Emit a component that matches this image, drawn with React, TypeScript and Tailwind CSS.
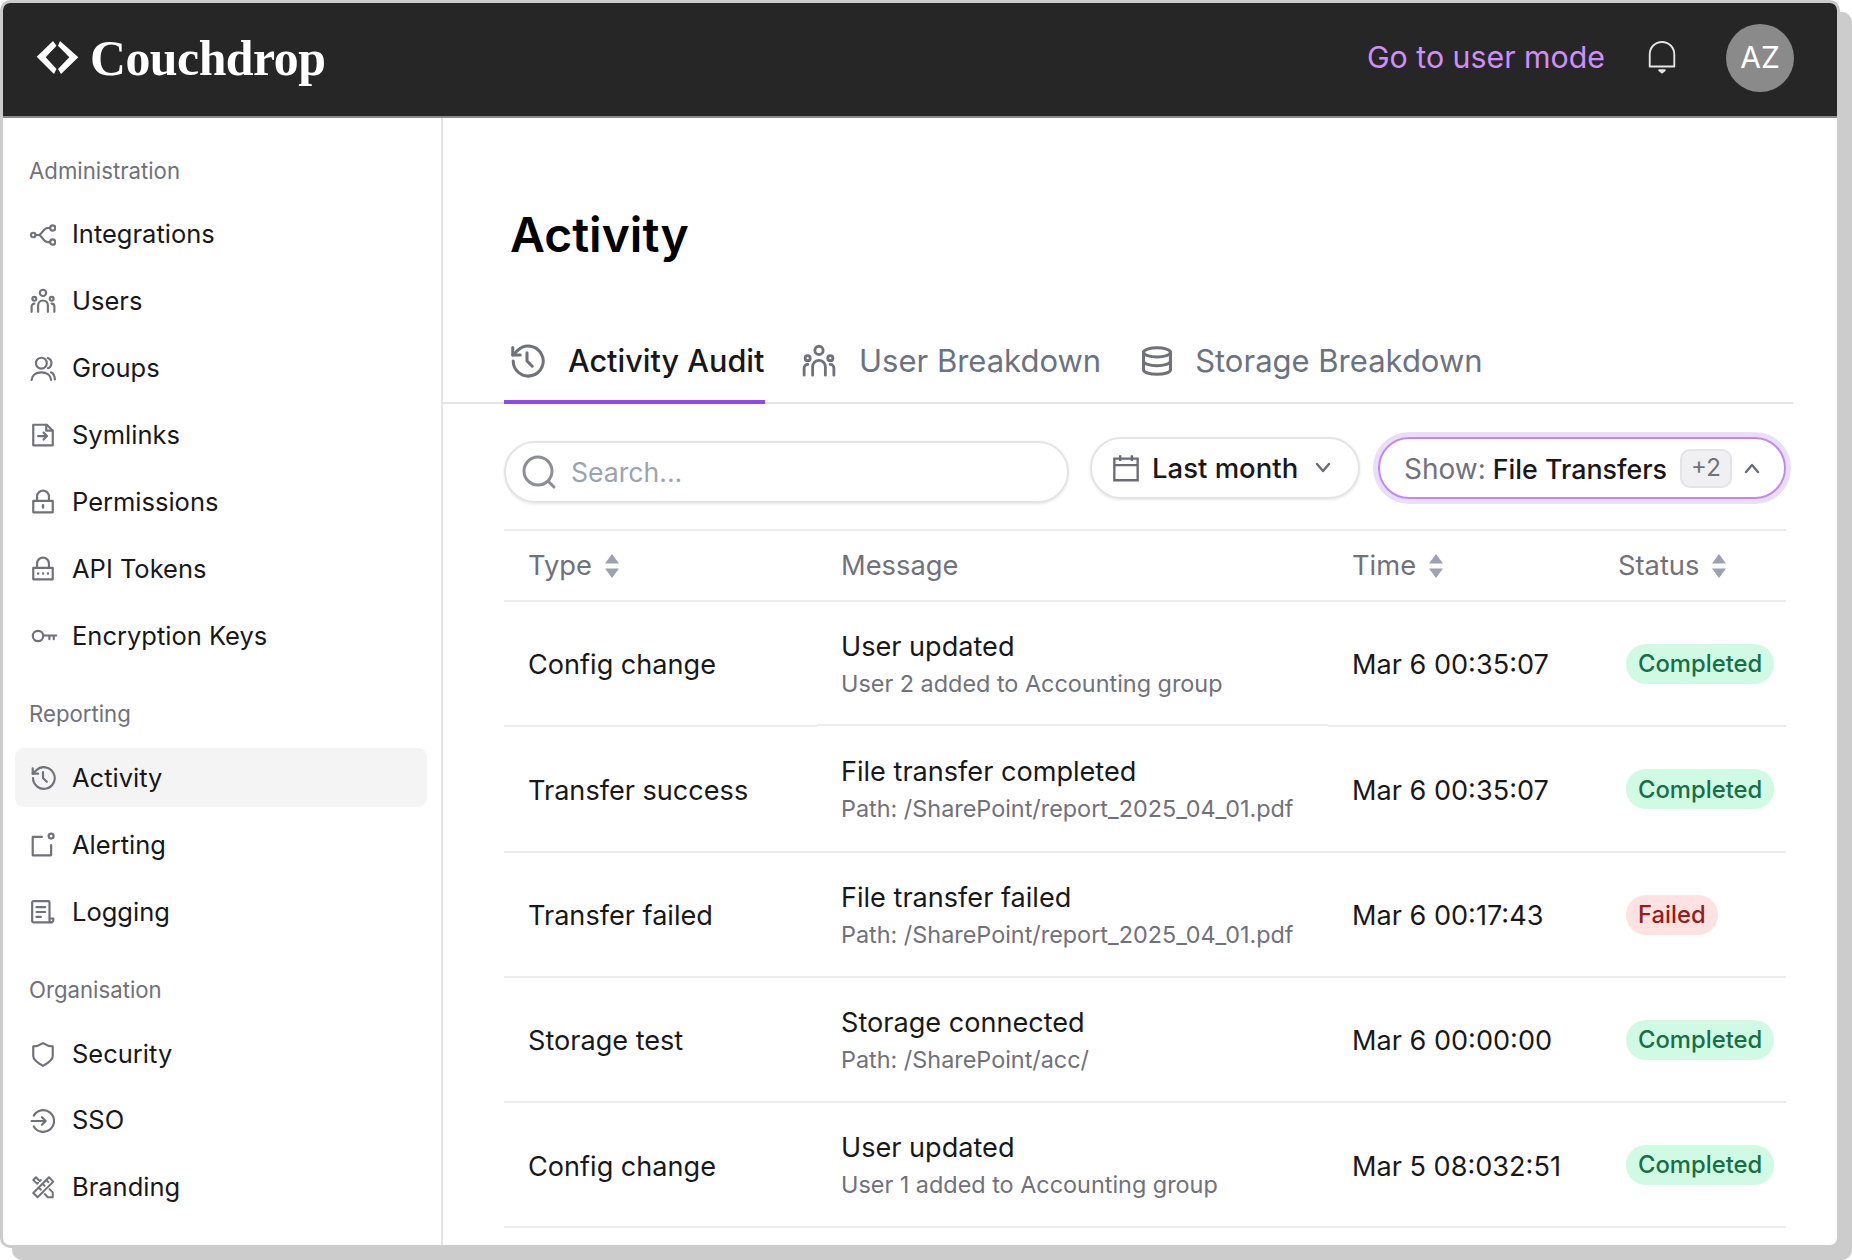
import React from "react";

const P = (props: React.SVGProps<SVGSVGElement>) => (
  <svg viewBox="0 0 24 24" fill="none" stroke="currentColor" strokeWidth="2" strokeLinecap="round" strokeLinejoin="round" {...props} />
);

const IconIntegrations = () => (
  <P className="w-[26px] h-[26px]">
    <circle cx="3" cy="12" r="2.100" />
    <circle cx="21" cy="5.500" r="2.400" />
    <circle cx="21" cy="18.500" r="2.400" />
    <path d="M5 12h3c3 0 4-6.200 8-6.500h2.600M8 12c3 0 4 6.200 8 6.500h2.600" />
  </P>
);
const IconUsers = ({ c = "w-[26px] h-[26px]" }: { c?: string }) => (
  <P className={c}>
    <circle cx="12" cy="4.500" r="2.900" />
    <circle cx="4" cy="10" r="1.800" />
    <circle cx="20" cy="10" r="1.800" />
    <path d="M7.500 22v-6a4.500 4.500 0 0 1 9 0v6M1.500 22v-5a2.600 2.600 0 0 1 2.600-2.600M22.500 22v-5a2.600 2.600 0 0 0-2.600-2.600" />
  </P>
);
const IconGroups = () => (
  <P className="w-[26px] h-[26px]">
    <circle cx="10.500" cy="7.500" r="5" />
    <path d="M1.500 23c.3-4.500 4-7 9-7s8.700 2.500 9 7M16.500 2.800a5 5 0 0 1 0 9.400M19.500 16c2 1 3.300 3.500 3.500 6.500" />
  </P>
);
const IconSymlink = () => (
  <P className="w-[26px] h-[26px]">
    <path d="M3 2.500h12.500l5.500 5.500v13.500H3z" />
    <path d="M15 2.500V8h6M7.500 13h8M12.500 9.800l3.200 3.200-3.200 3.200" />
  </P>
);
const IconLock = ({ dots }: { dots?: boolean }) => (
  <P className="w-[26px] h-[26px]">
    <path d="M3 11h18v10.500H3zM6.500 11V7a5.500 5.500 0 0 1 11 0v4" />
    {dots ? (
      <path d="M7.500 16.200h.1M12 16.200h.1M16.500 16.200h.1" strokeWidth="2.200" />
    ) : (
      <path d="M12 15v2" strokeWidth="2.200" />
    )}
  </P>
);
const IconKey = () => (
  <P className="w-[28px] h-[26px]">
    <circle cx="6.500" cy="12" r="4.800" />
    <path d="M11.300 11.500h12M17 11.500v3.500M21 11.500v3.500" />
  </P>
);
const IconHistory = ({ c = "w-[26px] h-[26px]" }: { c?: string }) => (
  <P className={c}>
    <path d="M2.800 12a10 10 0 1 0 3-7.100L2.500 8" />
    <path d="M2.500 3v5h5M12 6.500V12l3.500 3.500" />
  </P>
);
const IconAlert = () => (
  <P className="w-[26px] h-[26px]">
    <path d="M11 4.500H2.500v17h17V12" />
    <circle cx="19.500" cy="3.800" r="2.300" />
  </P>
);
const IconLog = () => (
  <P className="w-[26px] h-[26px]">
    <path d="M5.500 21.500H3.300A1.300 1.300 0 0 1 2 20.200V3.300A1.300 1.300 0 0 1 3.300 2h13.400A1.300 1.300 0 0 1 18 3.300V20a1.800 1.800 0 0 0 3.500 0v-2H18M5 21.500h15.500" />
    <path d="M6 7.500h8M6 12h8M6 16.500h4" />
  </P>
);
const IconShield = () => (
  <P className="w-[26px] h-[26px]">
    <path d="M3 5c3 0 6-1 9-3 3 2 6 3 9 3v9c0 3-3 5.500-9 9-6-3.500-9-6-9-9z" />
  </P>
);
const IconSso = () => (
  <P className="w-[26px] h-[26px]">
    <path d="M3.500 7a10 10 0 1 1 0 10M1.500 12h13M11 8.500l3.500 3.500-3.500 3.500" />
  </P>
);
const IconBranding = () => (
  <P className="w-[26px] h-[26px]">
    <path d="M3 17.500 17.500 3l4 4L7 21.500zM8 12.500l2 2M11.500 9l2 2M15 5.500l2 2" strokeWidth="1.800" />
    <path d="M5.500 8 3 5.500 5.500 3 8 5.500M10 5.500l-1 1M6.500 9l1-1M18 14l3 3v4.500h-4.500l-3-3" strokeWidth="1.800" />
  </P>
);
const IconDb = () => (
  <P className="w-[34px] h-[32px]" strokeWidth="2.200" preserveAspectRatio="none">
    <ellipse cx="12" cy="5.500" rx="9.500" ry="3.500" />
    <path d="M2.500 5.500v13c0 2 4.300 3.500 9.500 3.500s9.500-1.500 9.500-3.500v-13M2.500 12c0 2 4.300 3.500 9.500 3.500s9.500-1.500 9.500-3.500" />
  </P>
);
const IconBell = () => (
  <svg viewBox="0 0 30 36" className="w-[30px] h-[34px]" fill="none" stroke="#e5e5e5" strokeWidth="2" strokeLinejoin="round">
    <path d="M2 27v-13a13 13 0 0 1 26 0v13z" />
    <path d="M12 31h6l-3 2.500z" fill="#e5e5e5" />
  </svg>
);
const Search = () => (
  <svg viewBox="0 0 36 36" className="w-[36px] h-[36px] text-[#8e8e96]" fill="none" stroke="currentColor" strokeWidth="3" strokeLinecap="round">
    <circle cx="17" cy="17" r="14" />
    <path d="M27.500 27.500l5.500 5.500" />
  </svg>
);
const Calendar = () => (
  <P className="w-[28px] h-[28px]" strokeLinecap="butt" strokeLinejoin="miter">
    <path d="M2 4h20v18.500H2zM2 9.500h20M7 1v5M17 1v5" />
  </P>
);
const Sort = () => (
  <svg viewBox="0 0 16 28" className="w-[16px] h-[28px] text-[#9ca3af]" fill="currentColor">
    <path d="M8 2l7 9.500H1zM8 26l7-9.500H1z" />
  </svg>
);
const Chev = ({ up }: { up?: boolean }) => (
  <svg viewBox="0 0 20 12" className="w-[20px] h-[12px] text-[#6b6b76]" fill="none" stroke="currentColor" strokeWidth="2.400" strokeLinecap="round" strokeLinejoin="round">
    <path d={up ? "M4 10l6-7 6 7" : "M4 2l6 7 6-7"} />
  </svg>
);

const admin: [string, React.ReactNode][] = [
  ["Integrations", <IconIntegrations />],
  ["Users", <IconUsers />],
  ["Groups", <IconGroups />],
  ["Symlinks", <IconSymlink />],
  ["Permissions", <IconLock />],
  ["API Tokens", <IconLock dots />],
  ["Encryption Keys", <IconKey />],
];
const reporting: [string, React.ReactNode, boolean?][] = [
  ["Activity", <IconHistory />, true],
  ["Alerting", <IconAlert />],
  ["Logging", <IconLog />],
];
const org: [string, React.ReactNode][] = [
  ["Security", <IconShield />],
  ["SSO", <IconSso />],
  ["Branding", <IconBranding />],
];

const Section = ({ title, items, first }: { title: string; items: [string, React.ReactNode, boolean?][]; first?: boolean }) => (
  <div className={first ? "" : "mt-[34px]"}>
    <div className="h-[30px] leading-[30px] pl-[14px] mb-[19px] text-[22.2px] text-[#71717a]">{title}</div>
    <div className="flex flex-col gap-[7.9px]">
      {items.map(([label, icon, active]) => (
        <div key={label} className={`h-[59px] rounded-[9px] flex items-center ${active ? "bg-[#f4f4f5]" : ""}`}>
          <span className="w-[57px] pl-[15px] text-[#71717a] flex items-center">{icon}</span>
          <span className="text-[25.500px] text-[#18181b]">{label}</span>
        </div>
      ))}
    </div>
  </div>
);

const Badge = ({ ok, text }: { ok: boolean; text: string }) => (
  <span className={`ml-[8px] mb-[3px] inline-flex items-center h-[40px] px-[12px] rounded-full text-[23.800px] font-medium ${ok ? "bg-[#d1fae5] text-[#166f45]" : "bg-[#fee2e2] text-[#991b1b]"}`}>
    {text}
  </span>
);

const rows = [
  ["Config change", "User updated", "User 2 added to Accounting group", "Mar 6 00:35:07", "Completed"],
  ["Transfer success", "File transfer completed", "Path: /SharePoint/report_2025_04_01.pdf", "Mar 6 00:35:07", "Completed"],
  ["Transfer failed", "File transfer failed", "Path: /SharePoint/report_2025_04_01.pdf", "Mar 6 00:17:43", "Failed"],
  ["Storage test", "Storage connected", "Path: /SharePoint/acc/", "Mar 6 00:00:00", "Completed"],
  ["Config change", "User updated", "User 1 added to Accounting group", "Mar 5 08:032:51", "Completed"],
];

export default function App() {
  return (
    <div className="w-[1852px] h-[1260px] bg-white overflow-hidden font-['Inter',sans-serif]">
      <div className="w-[1840px] h-[1248px] border-[3px] border-[#cccccc] rounded-[10px] bg-white shadow-[12px_12px_0_#cccccc] flex flex-col overflow-hidden">
        <header className="h-[115px] shrink-0 bg-[#262626] border-b-2 border-[#8a8a8a] flex items-center pl-[33px] pr-[43px] pb-[4px]">
          <svg viewBox="36 40 44 35" className="w-[44px] h-[35px]" fill="#ffffff">
            <polygon points="36.700,56.700 53,41 56.500,45.700 45.700,57.300 56.500,69 54,74" />
            <polygon points="60,41 78.300,57.300 61,74 58,69 69.300,57.300 58,45.700" />
          </svg>
          <span className="ml-[10px] pt-[2px] font-['Liberation_Serif',serif] font-bold text-[49.800px] leading-none text-white tracking-[-0.5px]">Couchdrop</span>
          <div className="ml-auto flex items-center">
            <span className="text-[30.300px] text-[#d08dfb]">Go to user mode</span>
            <span className="ml-[42px] flex"><IconBell /></span>
            <span className="ml-[49px] w-[68px] h-[68px] rounded-full bg-[#8a8a8a] flex items-center justify-center text-white text-[30px]">AZ</span>
          </div>
        </header>
        <div className="flex flex-1 min-h-0">
          <aside className="w-[440px] shrink-0 border-r-2 border-[#e4e4e7] pt-[38px] pl-[12px] pr-[14px]">
            <Section title="Administration" items={admin} first />
            <Section title="Reporting" items={reporting} />
            <Section title="Organisation" items={org} />
          </aside>
          <main className="flex-1 min-w-0 pr-[44px]">
            <h1 className="pl-[67px] mt-[85px] h-[64px] leading-[64px] text-[48px] font-semibold text-black">Activity</h1>
            <div className="mt-[51px] pl-[61px] pt-[2px] h-[86px] border-b-2 border-[#e4e4e7] flex text-[31px] text-[#6b7280] whitespace-nowrap">
              <div className="relative w-[261px] flex items-center pl-[5px] text-[#18181b] font-medium">
                <span className="w-[59px] text-[#71717a]"><IconHistory c="w-[36px] h-[36px]" /></span>
                <span className="text-[30.600px]">Activity Audit</span>
                <span className="absolute left-0 right-0 bottom-[-2px] h-[4px] bg-[#9545ee]" />
              </div>
              <div className="flex items-center ml-[37px]">
                <span className="w-[57px] text-[#71717a]"><IconUsers c="w-[34px] h-[34px]" /></span>
                <span>User Breakdown</span>
              </div>
              <div className="flex items-center ml-[39px]">
                <span className="w-[55px] text-[#71717a]"><IconDb /></span>
                <span>Storage Breakdown</span>
              </div>
            </div>
            <div className="mt-[33px] ml-[61px] flex items-start whitespace-nowrap">
              <div className="mt-[4px] w-[565px] h-[62px] rounded-full border-2 border-[#e4e4e7] shadow-[0_1px_3px_rgba(0,0,0,0.1)] flex items-center pl-[15px] text-[26.600px] text-[#9ca3af]">
                <Search />
                <span className="ml-[14px] pt-[2px]">Search...</span>
              </div>
              <div className="ml-[21px] w-[270px] h-[62px] rounded-full border-2 border-[#e4e4e7] shadow-[0_1px_3px_rgba(0,0,0,0.1)] flex items-center pl-[20px] text-[27.500px] text-[#18181b]">
                <span className="text-[#6b6b76]"><Calendar /></span>
                <span className="ml-[12px] pt-[2px] font-medium">Last month</span>
                <span className="ml-[15px]"><Chev /></span>
              </div>
              <div className="ml-[18px] w-[408px] h-[62px] rounded-full border-2 border-[#c084fc] ring-[5px] ring-[#e9dffc] flex items-center pl-[24px] text-[28px] text-[#71717a]">
                <span className="pt-[2px]">Show:</span>
                <span className="ml-[7px] pt-[2px] text-[26.800px] text-[#18181b] font-medium">File Transfers</span>
                <span className="ml-[13px] w-[52px] h-[39px] rounded-[10px] bg-[#f0f0f2] border-2 border-[#e4e4e7] flex items-center justify-center text-[24px] text-[#71717a]">+2</span>
                <span className="ml-[10px]"><Chev up /></span>
              </div>
            </div>
            <div className="mt-[26px] ml-[61px] w-[1282px] border-t-2 border-[#eceded]">
              <div className="grid grid-cols-[313px_511px_266px_192px] h-[71px] pt-[1px] items-center text-[27.300px] text-[#71717a] border-b-2 border-[#eceded]">
                {["Type", "Message", "Time", "Status"].map((h) => (
                  <div key={h} className="pl-[24px] flex items-center gap-[12px]">
                    <span>{h}</span>
                    {h !== "Message" && <Sort />}
                  </div>
                ))}
              </div>
              {rows.map((r, i) => (
                <div key={i} className="relative grid grid-cols-[313px_511px_266px_192px] h-[125.3px] pt-[4px] items-center border-b-2 border-[#eceded] text-[27.100px] text-[#18181b]">
                  <div className="pl-[24px]">{r[0]}</div>
                  <div className="pl-[24px] pb-[1px]">
                    <div className="leading-[37px] pt-[1px]">{r[1]}</div>
                    <div className="leading-[38px] text-[23.400px] text-[#71717a]">{r[2]}</div>
                  </div>
                  <div className="pl-[24px]">{r[3]}</div>
                  <div className="pl-[24px] flex items-center"><Badge ok={r[4] === "Completed"} text={r[4]} /></div>
                  {i === 0 && <span className="absolute left-[313px] w-[511px] bottom-[-2px] h-[3px] bg-[#eceded] border-b border-white" />}
                </div>
              ))}
            </div>
          </main>
        </div>
      </div>
    </div>
  );
}
